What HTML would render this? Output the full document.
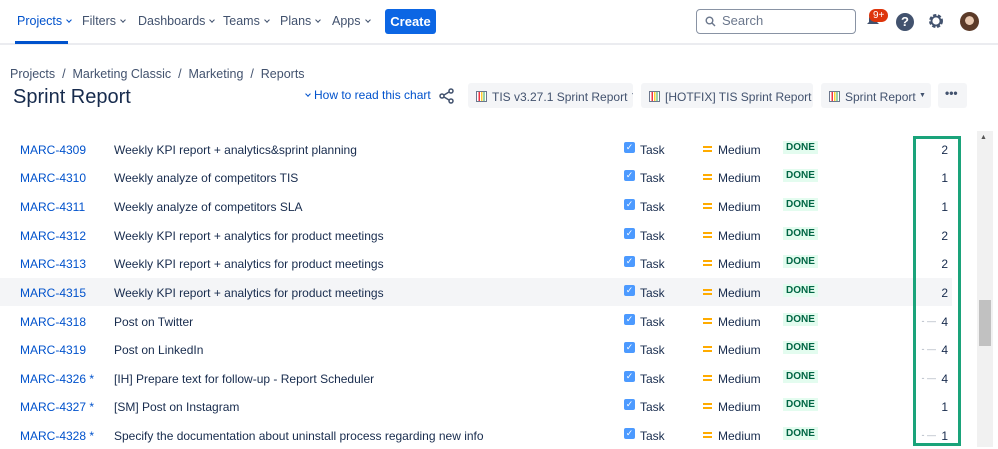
<!DOCTYPE html>
<html><head><meta charset="utf-8"><style>
*{box-sizing:border-box;margin:0;padding:0}
body{width:998px;height:447px;overflow:hidden;background:#fff;font-family:"Liberation Sans",sans-serif;color:#172b4d;position:relative}
.a{position:absolute;white-space:nowrap}
.nav{font-size:12.5px;color:#42526e;top:14px}
.chev{display:inline-block;width:4px;height:4px;border-right:1.5px solid currentColor;border-bottom:1.5px solid currentColor;transform:rotate(45deg);margin-left:5px;vertical-align:3px}
.btn{background:#f4f5f7;border-radius:3px;height:25px;top:83px;font-size:12px;color:#42526e;line-height:25px;padding-left:8px;overflow:hidden}
.ic{display:inline-block;width:11px;height:11px;border:1px solid #6b778c;vertical-align:-1px;margin-right:5px;background:linear-gradient(90deg,#fff 15%,#e34 15% 35%,#fff 35% 45%,#fc3 45% 60%,#fff 60% 70%,#3a5 70% 85%,#fff 85%)}
.tri{font-size:7px;vertical-align:4px}
.row{position:absolute;left:0;width:952px;height:28px;font-size:12px}
.row span{position:absolute;top:8px}
.k{left:20px;color:#0052cc}
.s{left:114px;color:#172b4d}
.cb{left:624px;top:7px!important;width:11px;height:11px;background:#4c9aff;border-radius:2px;color:#fff;font-size:9px;line-height:11px;text-align:center}
.t{left:640px}
.eq{left:703px;top:11px!important;width:9px;height:6px;border-top:2px solid #ffab00;border-bottom:2px solid #ffab00}
.m{left:718px}
.d{left:783px;top:6px!important;background:#e3fcef;color:#006644;font-size:10px;font-weight:bold;padding:1px 3px}
.n{right:4px;color:#172b4d}
.dash{right:16px;color:#a5adba;font-size:9px;top:9px!important}
</style></head><body>
<div class="a" style="left:0;top:43px;width:998px;height:2px;background:#ebecf0"></div>
<div class="a nav" style="left:17px;color:#0052cc">Projects<span class="chev"></span></div>
<div class="a" style="left:15px;top:41px;width:53px;height:3px;background:#0052cc"></div>
<div class="a nav" style="left:82px">Filters<span class="chev"></span></div>
<div class="a nav" style="left:138px">Dashboards<span class="chev"></span></div>
<div class="a nav" style="left:223px">Teams<span class="chev"></span></div>
<div class="a nav" style="left:280px">Plans<span class="chev"></span></div>
<div class="a nav" style="left:332px">Apps<span class="chev"></span></div>
<div class="a" style="left:385px;top:9px;width:51px;height:25px;background:#0c66e4;border-radius:3px;color:#fff;font-size:13px;font-weight:bold;text-align:center;line-height:25px">Create</div>
<div class="a" style="left:696px;top:9px;width:160px;height:25px;border:1.5px solid #8993a4;border-radius:4px;font-size:13px;color:#6b778c;line-height:22px;padding-left:25px">Search
<svg style="position:absolute;left:8px;top:6px" width="11" height="11" viewBox="0 0 11 11"><circle cx="4.5" cy="4.5" r="3.3" fill="none" stroke="#6b778c" stroke-width="1.4"/><path d="M7 7l3 3" stroke="#6b778c" stroke-width="1.4"/></svg></div>
<svg class="a" style="left:866px;top:13px" width="14" height="16" viewBox="0 0 14 16"><path d="M7 1c3 0 4 2 4 5v3l2 2H1l2-2V6c0-3 1-5 4-5z" fill="#42526e"/></svg>
<div class="a" style="left:869px;top:9px;background:#de350b;color:#fff;font-size:10px;border-radius:7px;padding:0 4px;line-height:13px">9+</div>
<div class="a" style="left:896px;top:13px;width:18px;height:18px;border-radius:50%;background:#42526e;color:#fff;font-size:13px;font-weight:bold;text-align:center;line-height:18px">?</div>
<svg class="a" style="left:927px;top:12px" width="18" height="18" viewBox="0 0 18 18"><circle cx="9" cy="9" r="5.5" fill="none" stroke="#42526e" stroke-width="3" stroke-dasharray="3 1.6"/><circle cx="9" cy="9" r="4.5" fill="none" stroke="#42526e" stroke-width="1.8"/></svg>
<div class="a" style="left:960px;top:12px;width:19px;height:19px;border-radius:50%;background:radial-gradient(circle at 50% 45%,#e8c8b0 30%,#5b3a28 32%)"></div>

<div class="a" style="left:10px;top:67px;font-size:12.5px;color:#42526e">Projects &nbsp;/ &nbsp;Marketing Classic &nbsp;/ &nbsp;Marketing &nbsp;/ &nbsp;Reports</div>
<div class="a" style="left:13px;top:86px;font-size:20px;color:#172b4d">Sprint Report</div>
<div class="a" style="left:306px;top:88px;font-size:12px;color:#0052cc"><span class="chev" style="margin:0 4px 0 0;vertical-align:3px"></span>How to read this chart</div>
<svg class="a" style="left:439px;top:88px" width="16" height="16" viewBox="0 0 16 16"><circle cx="12" cy="3" r="2" fill="none" stroke="#42526e" stroke-width="1.5"/><circle cx="3" cy="8" r="2" fill="none" stroke="#42526e" stroke-width="1.5"/><circle cx="12" cy="13" r="2" fill="none" stroke="#42526e" stroke-width="1.5"/><path d="M5 7l5-3M5 9l5 3" stroke="#42526e" stroke-width="1.5"/></svg>
<div class="a btn" style="left:468px;width:165px"><span class="ic"></span>TIS v3.27.1 Sprint Report <span class="tri">▼</span></div>
<div class="a btn" style="left:641px;width:172px"><span class="ic"></span>[HOTFIX] TIS Sprint Report <span class="tri">▼</span></div>
<div class="a btn" style="left:821px;width:110px"><span class="ic"></span>Sprint Report <span class="tri">▼</span></div>
<div class="a btn" style="left:938px;width:29px;font-weight:bold;padding-left:7px;line-height:21px">•••</div>

<div class="row" style="top:135px"><span class="k">MARC-4309</span><span class="s">Weekly KPI report + analytics&amp;sprint planning</span><span class="cb">✓</span><span class="t">Task</span><span class="eq"></span><span class="m">Medium</span><span class="d">DONE</span><span class="n">2</span></div>
<div class="row" style="top:163px"><span class="k">MARC-4310</span><span class="s">Weekly analyze of competitors TIS</span><span class="cb">✓</span><span class="t">Task</span><span class="eq"></span><span class="m">Medium</span><span class="d">DONE</span><span class="n">1</span></div>
<div class="row" style="top:192px"><span class="k">MARC-4311</span><span class="s">Weekly analyze of competitors SLA</span><span class="cb">✓</span><span class="t">Task</span><span class="eq"></span><span class="m">Medium</span><span class="d">DONE</span><span class="n">1</span></div>
<div class="row" style="top:221px"><span class="k">MARC-4312</span><span class="s">Weekly KPI report + analytics for product meetings</span><span class="cb">✓</span><span class="t">Task</span><span class="eq"></span><span class="m">Medium</span><span class="d">DONE</span><span class="n">2</span></div>
<div class="row" style="top:249px"><span class="k">MARC-4313</span><span class="s">Weekly KPI report + analytics for product meetings</span><span class="cb">✓</span><span class="t">Task</span><span class="eq"></span><span class="m">Medium</span><span class="d">DONE</span><span class="n">2</span></div>
<div class="row" style="top:278px;background:#f4f5f7"><span class="k">MARC-4315</span><span class="s">Weekly KPI report + analytics for product meetings</span><span class="cb">✓</span><span class="t">Task</span><span class="eq"></span><span class="m">Medium</span><span class="d">DONE</span><span class="n">2</span></div>
<div class="row" style="top:307px"><span class="k">MARC-4318</span><span class="s">Post on Twitter</span><span class="cb">✓</span><span class="t">Task</span><span class="eq"></span><span class="m">Medium</span><span class="d">DONE</span><span class="dash">- —</span><span class="n">4</span></div>
<div class="row" style="top:335px"><span class="k">MARC-4319</span><span class="s">Post on LinkedIn</span><span class="cb">✓</span><span class="t">Task</span><span class="eq"></span><span class="m">Medium</span><span class="d">DONE</span><span class="dash">- —</span><span class="n">4</span></div>
<div class="row" style="top:364px"><span class="k">MARC-4326 *</span><span class="s">[IH] Prepare text for follow-up - Report Scheduler</span><span class="cb">✓</span><span class="t">Task</span><span class="eq"></span><span class="m">Medium</span><span class="d">DONE</span><span class="dash">- —</span><span class="n">4</span></div>
<div class="row" style="top:392px"><span class="k">MARC-4327 *</span><span class="s">[SM] Post on Instagram</span><span class="cb">✓</span><span class="t">Task</span><span class="eq"></span><span class="m">Medium</span><span class="d">DONE</span><span class="n">1</span></div>
<div class="row" style="top:421px"><span class="k">MARC-4328 *</span><span class="s">Specify the documentation about uninstall process regarding new info</span><span class="cb">✓</span><span class="t">Task</span><span class="eq"></span><span class="m">Medium</span><span class="d">DONE</span><span class="dash">- —</span><span class="n">1</span></div>

<div class="a" style="left:913px;top:136px;width:48px;height:310px;border:3px solid #1aa37a"></div>
<div class="a" style="left:977px;top:131px;width:16px;height:316px;background:#f1f1f1"></div>
<div class="a" style="left:980px;top:134px;font-size:7px;color:#555">▲</div>
<div class="a" style="left:979px;top:300px;width:12px;height:46px;background:#c1c1c1"></div>
</body></html>
